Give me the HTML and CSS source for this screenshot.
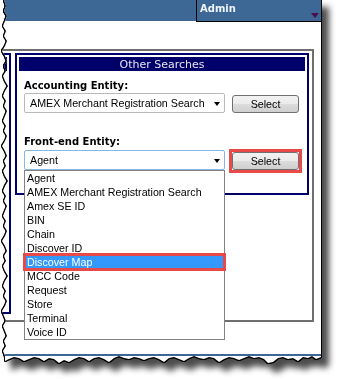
FILE: index.html
```html
<!DOCTYPE html>
<html lang="en">
<head>
    <meta charset="UTF-8">
    <title>Other Searches</title>
    <link rel="stylesheet" href="styles.css">
</head>
<body>
    <div class="page">
        <div class="sheet">
            <div class="topbar">
                <div class="topbar-fill"></div>
                <div class="admin">Admin<span class="caret"></span></div>
            </div>

            <div class="frame">
                <div class="side-panel"><div class="side-title"></div></div>

                <div class="panel">
                    <div class="panel-title">Other Searches</div>
                    <div class="panel-body">
                        <div class="field-label">Accounting Entity:</div>
                        <div class="field-row">
                            <div class="combo">AMEX Merchant Registration Search<span class="combo-arrow"></span></div>
                            <button class="btn">Select</button>
                        </div>

                        <div class="field-label second">Front-end Entity:</div>
                        <div class="field-row open">
                            <div class="combo-wrap">
                                <div class="combo focused">Agent<span class="combo-arrow"></span></div>
                                <ul class="combo-list">
                                    <li>Agent</li>
                                    <li>AMEX Merchant Registration Search</li>
                                    <li>Amex SE ID</li>
                                    <li>BIN</li>
                                    <li>Chain</li>
                                    <li>Discover ID</li>
                                    <li class="active">Discover Map</li>
                                    <li>MCC Code</li>
                                    <li>Request</li>
                                    <li>Store</li>
                                    <li>Terminal</li>
                                    <li>Voice ID</li>
                                </ul>
                            </div>
                            <span class="callout"><button class="btn">Select</button></span>
                        </div>
                    </div>
                </div>
            </div>

            <div class="footer-line"></div>
        </div>
    </div>
</body>
</html>
```

FILE: styles.css
```css
body {
    margin: 0;
    background-color: #fff;
    overflow: hidden;
}

/* torn-paper look: outline + drop shadow around the clipped sheet */
.page {
    width: 338px;
    height: 379px;
    filter: drop-shadow(1px 0 0 #000) drop-shadow(-1px 0 0 #000) drop-shadow(0 1px 0 #000) drop-shadow(0 -1px 0 #000) drop-shadow(7px 8px 3px rgba(0, 0, 0, 0.7));
}

.sheet {
    width: 321px;
    height: 366px;
    background-color: #fff;
    clip-path: polygon(4px 0, 321px 0, 321px 357px, 316px 359px, 312px 356px, 308px 358px, 303px 357px, 298px 361px, 293px 358px, 288px 359px, 283px 357px, 278px 358px, 273px 362px, 268px 363px, 264px 359px, 259px 357px, 254px 358px, 249px 356px, 244px 358px, 239px 360px, 234px 358px, 229px 357px, 224px 359px, 219px 362px, 214px 358px, 209px 357px, 204px 359px, 199px 358px, 194px 356px, 189px 358px, 184px 361px, 179px 359px, 174px 357px, 169px 358px, 164px 362px, 159px 359px, 154px 357px, 149px 358px, 144px 360px, 139px 358px, 134px 357px, 129px 359px, 124px 358px, 119px 356px, 114px 358px, 109px 362px, 104px 359px, 99px 357px, 94px 358px, 89px 361px, 84px 358px, 79px 357px, 74px 359px, 69px 362px, 64px 360px, 59px 363px, 54px 359px, 49px 358px, 44px 361px, 39px 358px, 34px 357px, 29px 359px, 24px 361px, 19px 358px, 14px 357px, 9px 359px, 5px 361px, 5px 356px, 3px 351px, 6px 346px, 4px 341px, 7px 336px, 5px 331px, 3px 326px, 6px 321px, 4px 316px, 2px 311px, 5px 306px, 7px 301px, 4px 296px, 6px 291px, 3px 286px, 5px 281px, 8px 276px, 5px 271px, 3px 266px, 6px 261px, 4px 256px, 7px 251px, 5px 246px, 2px 241px, 5px 236px, 7px 231px, 4px 226px, 6px 221px, 3px 216px, 5px 211px, 7px 206px, 4px 201px, 6px 196px, 3px 191px, 5px 186px, 8px 181px, 5px 176px, 3px 171px, 6px 166px, 4px 161px, 7px 156px, 5px 151px, 2px 146px, 5px 141px, 7px 136px, 4px 131px, 6px 126px, 3px 121px, 5px 116px, 7px 111px, 4px 106px, 6px 101px, 3px 96px, 5px 91px, 8px 86px, 5px 81px, 3px 76px, 6px 71px, 4px 66px, 7px 61px, 5px 56px, 2px 51px, 5px 46px, 7px 41px, 4px 36px, 6px 31px, 3px 26px, 5px 21px, 7px 16px, 4px 11px, 6px 6px);
}

.topbar {
    display: flex;
    height: 22px;
}

.topbar-fill {
    flex: 1;
    height: 21px;
    background-color: #3d6795;
}

.admin {
    position: relative;
    width: 125px;
    height: 22px;
    box-sizing: border-box;
    padding: 3px 0 0 3px;
    background-color: #3d6795;
    border-left: 1px solid #000;
    border-bottom: 1px solid #000;
    color: #eef3fa;
    font: bold 10px/12px "DejaVu Sans", Verdana, sans-serif;
}

    .admin .caret {
        position: absolute;
        right: 2px;
        bottom: 3px;
        width: 0;
        height: 0;
        border-left: 4.5px solid transparent;
        border-right: 4.5px solid transparent;
        border-top: 5px solid #4d0f4a;
    }

.frame {
    display: flex;
    align-items: flex-start;
    width: 314px;
    height: 273px;
    box-sizing: border-box;
    margin-top: 27px;
    padding-top: 2px;
    border: 2px solid #6f6f6f;
}

.side-panel {
    width: 9px;
    height: 261px;
    box-sizing: border-box;
    padding: 2px 2px 0 0;
    border: 2px solid #00006b;
    border-left: 0;
}

.side-title {
    height: 14px;
    background-color: #00006b;
}

.panel {
    width: 294px;
    height: 142px;
    box-sizing: border-box;
    margin-left: 4px;
    padding: 2px;
    border: 2px solid #00006b;
}

.panel-title {
    height: 14px;
    box-sizing: border-box;
    padding-top: 1px;
    background-color: #00006b;
    color: #e4e4ee;
    text-align: center;
    font: 11px/14px "DejaVu Sans", Verdana, sans-serif;
}

.panel-body {
    padding: 9px 0 0 5px;
}

.field-label {
    color: #000;
    font: bold 10px/12px "DejaVu Sans", Verdana, sans-serif;
}

    .field-label.second {
        margin-top: 23px;
    }

.field-row {
    display: flex;
    align-items: flex-end;
    margin-top: 1px;
}

    .field-row.open {
        align-items: flex-start;
        margin-top: 2px;
    }

.combo-wrap {
    position: relative;
}

.combo {
    position: relative;
    width: 201px;
    height: 20px;
    box-sizing: border-box;
    padding-left: 5px;
    border: 1px solid #b9b9b9;
    border-radius: 2px;
    background-color: #fff;
    color: #000;
    white-space: nowrap;
    font: 10.7px/18px "Liberation Sans", Arial, sans-serif;
}

    .combo.focused {
        border-color: #86b6e8;
    }

.combo-arrow {
    position: absolute;
    right: 4px;
    top: 8px;
    width: 0;
    height: 0;
    border-left: 3.5px solid transparent;
    border-right: 3.5px solid transparent;
    border-top: 4px solid #000;
}

.btn {
    width: 67px;
    height: 18px;
    box-sizing: border-box;
    margin: 0 0 0 7px;
    padding: 0;
    border: 1px solid #707070;
    border-radius: 3px;
    background: linear-gradient(#f2f2f2 0%, #ebebeb 50%, #dddddd 50%, #cfcfcf 100%);
    color: #000;
    font: 10.7px/16px "Liberation Sans", Arial, sans-serif;
}

.callout {
    display: flex;
    margin: -1px 0 0 4px;
    border: 3px solid #e84a4a;
}

    .callout .btn {
        margin-left: 0;
    }

.combo-list {
    position: absolute;
    top: 100%;
    left: 0;
    z-index: 2;
    width: 201px;
    box-sizing: border-box;
    margin: 0;
    padding: 0;
    list-style: none;
    border: 1px solid #828282;
    background-color: #fff;
    color: #000;
    font: 10.7px/14px "Liberation Sans", Arial, sans-serif;
}

    .combo-list li {
        height: 14px;
        padding-left: 2px;
        white-space: nowrap;
    }

        .combo-list li.active {
            background-color: #3399ff;
            color: #fff;
            outline: 3px solid #e84a4a;
            outline-offset: -1px;
        }

.footer-line {
    height: 2px;
    margin-top: 32px;
    background-color: #3d6795;
}
```
